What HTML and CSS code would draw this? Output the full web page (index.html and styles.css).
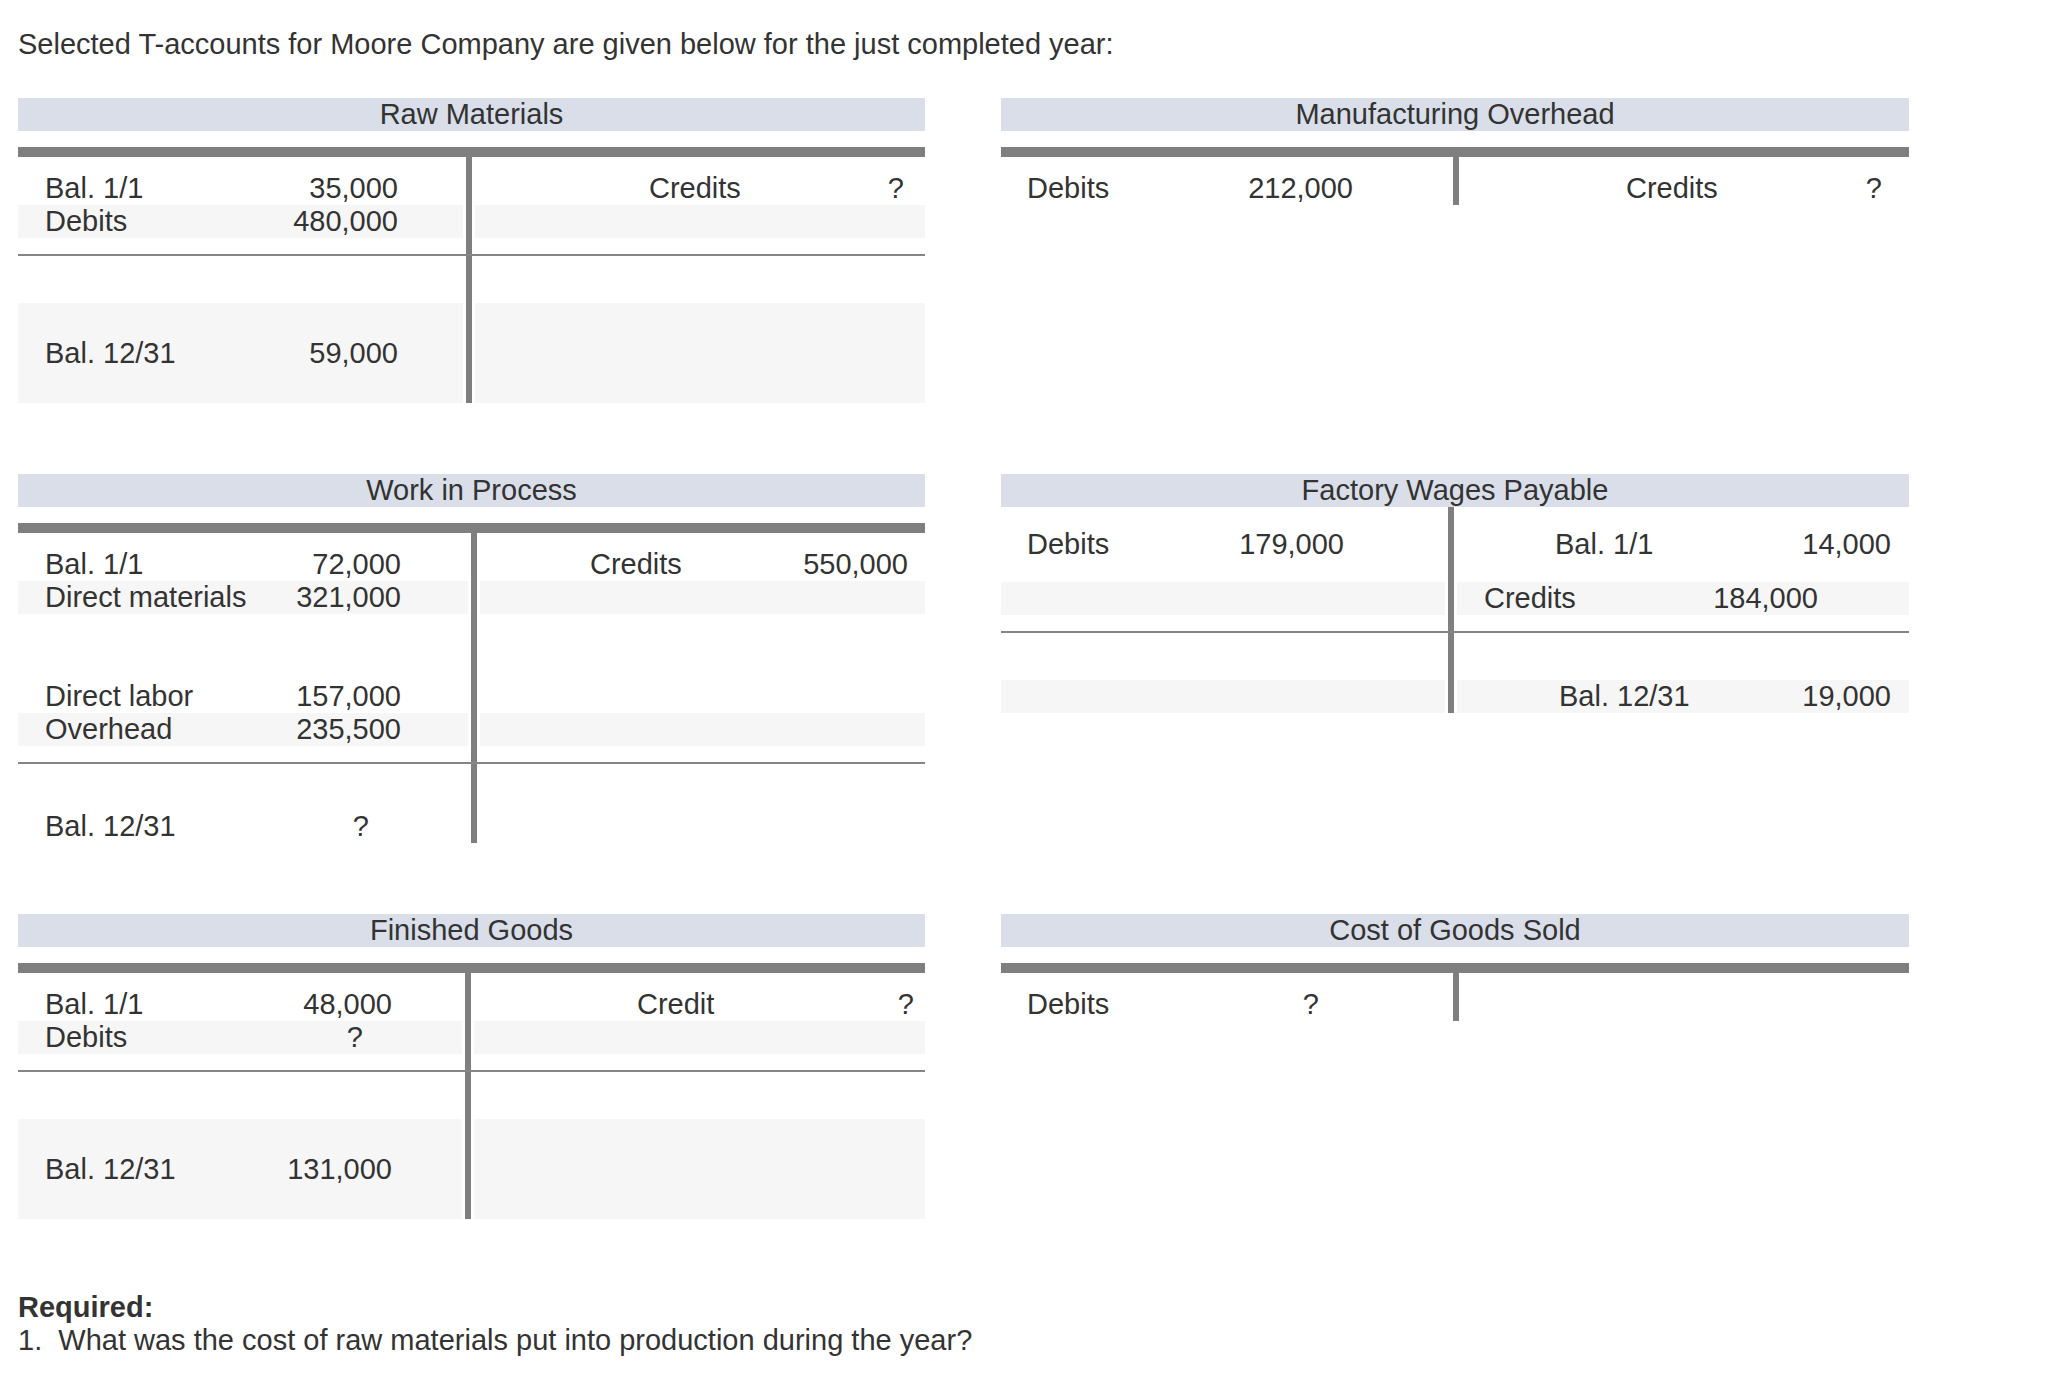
FILE: index.html
```html
<!DOCTYPE html>
<html lang="en">
<head>
<meta charset="utf-8">
<title>T-accounts for Moore Company</title>
<link rel="stylesheet" href="styles.css">
</head>
<body>
<main class="page">
  <p class="intro">Selected T-accounts for Moore Company are given below for the just completed year:</p>

  <div class="accounts">
    <section class="taccount taccount--raw">
      <h2 class="taccount__title">Raw Materials</h2>
      <div class="taccount__body">
        <div class="bar"></div>
        <div class="trow trow--open">
          <div class="cell cell--debit"><span>Bal. 1/1</span><span>35,000</span></div>
          <div class="cell cell--credit"><span>Credits</span><span>?</span></div>
        </div>
        <div class="trow trow--striped">
          <div class="cell cell--debit"><span>Debits</span><span>480,000</span></div>
          <div class="cell cell--credit"></div>
        </div>
        <div class="divider"></div>
        <div class="trow trow--striped trow--balance">
          <div class="cell cell--debit"><span>Bal. 12/31</span><span>59,000</span></div>
          <div class="cell cell--credit"></div>
        </div>
      </div>
    </section>

    <section class="taccount taccount--overhead">
      <h2 class="taccount__title">Manufacturing Overhead</h2>
      <div class="taccount__body">
        <div class="bar"></div>
        <div class="trow trow--open">
          <div class="cell cell--debit"><span>Debits</span><span>212,000</span></div>
          <div class="cell cell--credit"><span>Credits</span><span>?</span></div>
        </div>
      </div>
    </section>

    <section class="taccount taccount--wip">
      <h2 class="taccount__title">Work in Process</h2>
      <div class="taccount__body">
        <div class="bar"></div>
        <div class="trow trow--open">
          <div class="cell cell--debit"><span>Bal. 1/1</span><span>72,000</span></div>
          <div class="cell cell--credit"><span>Credits</span><span>550,000</span></div>
        </div>
        <div class="trow trow--striped">
          <div class="cell cell--debit"><span>Direct materials</span><span>321,000</span></div>
          <div class="cell cell--credit"></div>
        </div>
        <div class="trow trow--spaced">
          <div class="cell cell--debit"><span>Direct labor</span><span>157,000</span></div>
          <div class="cell cell--credit"></div>
        </div>
        <div class="trow trow--striped">
          <div class="cell cell--debit"><span>Overhead</span><span>235,500</span></div>
          <div class="cell cell--credit"></div>
        </div>
        <div class="divider"></div>
        <div class="trow trow--close">
          <div class="cell cell--debit cell--inset"><span>Bal. 12/31</span><span>?</span></div>
          <div class="cell cell--credit"></div>
        </div>
      </div>
    </section>

    <section class="taccount taccount--wages">
      <h2 class="taccount__title">Factory Wages Payable</h2>
      <div class="taccount__body">
        <div class="trow trow--wide">
          <div class="cell cell--debit"><span>Debits</span><span>179,000</span></div>
          <div class="cell cell--credit"><span>Bal. 1/1</span><span>14,000</span></div>
        </div>
        <div class="trow trow--striped">
          <div class="cell cell--debit"></div>
          <div class="cell cell--credit cell--wages-credits"><span>Credits</span><span>184,000</span></div>
        </div>
        <div class="divider"></div>
        <div class="trow trow--striped trow--after-divider">
          <div class="cell cell--debit"></div>
          <div class="cell cell--credit cell--wages-close"><span>Bal. 12/31</span><span>19,000</span></div>
        </div>
      </div>
    </section>

    <section class="taccount taccount--fg">
      <h2 class="taccount__title">Finished Goods</h2>
      <div class="taccount__body">
        <div class="bar"></div>
        <div class="trow trow--open">
          <div class="cell cell--debit"><span>Bal. 1/1</span><span>48,000</span></div>
          <div class="cell cell--credit"><span>Credit</span><span>?</span></div>
        </div>
        <div class="trow trow--striped">
          <div class="cell cell--debit cell--inset"><span>Debits</span><span>?</span></div>
          <div class="cell cell--credit"></div>
        </div>
        <div class="divider"></div>
        <div class="trow trow--striped trow--balance">
          <div class="cell cell--debit"><span>Bal. 12/31</span><span>131,000</span></div>
          <div class="cell cell--credit"></div>
        </div>
      </div>
    </section>

    <section class="taccount taccount--cogs">
      <h2 class="taccount__title">Cost of Goods Sold</h2>
      <div class="taccount__body">
        <div class="bar"></div>
        <div class="trow trow--open">
          <div class="cell cell--debit"><span>Debits</span><span>?</span></div>
          <div class="cell cell--credit"></div>
        </div>
      </div>
    </section>
  </div>

  <div class="required">
    <p class="required__label">Required:</p>
    <p class="required__item">1.&nbsp; What was the cost of raw materials put into production during the year?</p>
  </div>
</main>
</body>
</html>
```

FILE: styles.css
```css
* {
  box-sizing: border-box;
}

body {
  margin: 0;
  background: #ffffff;
  color: #333333;
  font-family: "Liberation Sans", Arial, sans-serif;
  font-size: 29px;
}

.page {
  padding: 28px 0 0 18px;
}

.intro {
  margin: 0;
  line-height: 33px;
}

.accounts {
  display: grid;
  grid-template-columns: 907px 908px;
  column-gap: 76px;
  row-gap: 71px;
  align-items: start;
  margin-top: 37px;
}

.taccount__title {
  margin: 0;
  height: 33px;
  line-height: 33px;
  background: #d9dee8;
  text-align: center;
  font-size: 29px;
  font-weight: normal;
  color: #333333;
}

.taccount__body {
  background-image: linear-gradient(#7f7f7f, #7f7f7f);
  background-repeat: no-repeat;
  background-size: 6px 100%;
  background-position: calc(var(--lw) + 3px) 0;
}

.bar {
  height: 10px;
  margin-top: 16px;
  background: #7f7f7f;
}

.divider {
  height: 2px;
  margin-top: 16px;
  background: #858585;
}

.trow {
  display: flex;
  column-gap: 12px;
  height: 33px;
}

.trow--open {
  height: 48px;
}

.trow--wide {
  height: 75px;
}

.trow--spaced {
  margin-top: 66px;
}

.trow--close {
  height: 79px;
}

.trow--balance {
  height: 100px;
  margin-top: 47px;
}

.trow--after-divider {
  margin-top: 47px;
}

.trow--striped .cell {
  background: #f6f6f6;
}

.cell {
  display: flex;
  justify-content: space-between;
  align-items: center;
  line-height: 33px;
  white-space: nowrap;
}

.trow--open .cell,
.trow--close .cell {
  align-items: flex-end;
}

.cell--debit {
  flex: 0 0 var(--lw);
  padding: 0 var(--dpr) 0 var(--dpl);
}

.cell--credit {
  flex: 1 1 auto;
  padding: 0 var(--cpr) 0 var(--cpl);
}

.cell--inset {
  padding-right: 99px;
}

.taccount--raw {
  --lw: 445px;
  --dpl: 27px;
  --dpr: 65px;
  --cpl: 174px;
  --cpr: 21px;
}

.taccount--overhead {
  --lw: 449px;
  --dpl: 26px;
  --dpr: 97px;
  --cpl: 164px;
  --cpr: 27px;
}

.taccount--wip {
  --lw: 450px;
  --dpl: 27px;
  --dpr: 67px;
  --cpl: 110px;
  --cpr: 17px;
}

.taccount--wages {
  --lw: 444px;
  --dpl: 26px;
  --dpr: 101px;
  --cpl: 98px;
  --cpr: 18px;
}

.cell--wages-credits {
  padding-left: 27px;
  padding-right: 91px;
}

.cell--wages-close {
  padding-left: 102px;
}

.taccount--fg {
  --lw: 444px;
  --dpl: 27px;
  --dpr: 70px;
  --cpl: 163px;
  --cpr: 11px;
}

.taccount--cogs {
  --lw: 449px;
  --dpl: 26px;
  --dpr: 131px;
  --cpl: 0px;
  --cpr: 0px;
}

.required {
  margin-top: 72px;
  line-height: 33px;
}

.required p {
  margin: 0;
}

.required__label {
  font-weight: bold;
}
```
